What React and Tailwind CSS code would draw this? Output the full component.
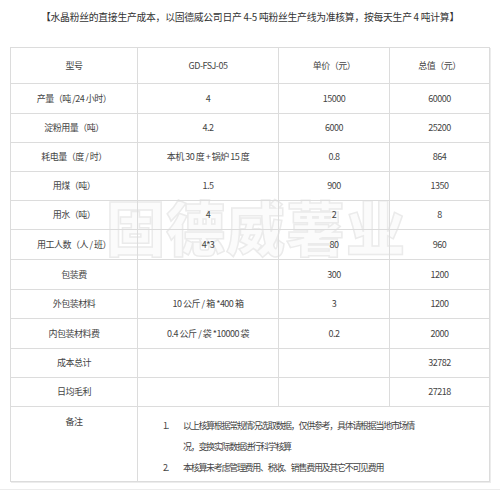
import React from "react";

const rows = [
  { h: "h-[30px]", name: "产量（吨 /24 小时）", model: "4", price: "15000", total: "60000" },
  { h: "h-[29px]", name: "淀粉用量（吨）", model: "4.2", price: "6000", total: "25200" },
  { h: "h-[29px]", name: "耗电量（度 / 时）", model: "本机 30 度 + 锅炉 15 度", price: "0.8", total: "864" },
  { h: "h-[29px]", name: "用煤（吨）", model: "1.5", price: "900", total: "1350" },
  { h: "h-[29px]", name: "用水（吨）", model: "4", price: "2", total: "8" },
  { h: "h-[30px]", name: "用工人数（人 / 班）", model: "4*3", price: "80", total: "960" },
  { h: "h-[30px]", name: "包装费", model: "", price: "300", total: "1200" },
  { h: "h-[29px]", name: "外包装材料", model: "10 公斤 / 箱 *400 箱", price: "3", total: "1200" },
  { h: "h-[30px]", name: "内包装材料费", model: "0.4 公斤 / 袋 *10000 袋", price: "0.2", total: "2000" },
  { h: "h-[29px]", name: "成本总计", model: "", price: "", total: "32782" },
  { h: "h-[29px]", name: "日均毛利", model: "", price: "", total: "27218" },
];

const cell = "border border-[#dcdcdc] text-center align-middle p-0";

export default function App() {
  return (
    <div className="relative w-[500px] h-[490px] bg-white overflow-hidden border-b border-[#ececec] font-['Microsoft_YaHei','Noto_Sans_CJK_SC',sans-serif] text-[#444]">
      {/* watermark, sits under the table text */}
      <div className="absolute left-[106px] top-[196px] text-[59px] leading-none font-black tracking-[1px] text-[#fbfbfb] [-webkit-text-stroke:1.5px_#ebebeb] pointer-events-none select-none whitespace-nowrap">
        固德威薯业
      </div>

      <p className="relative pt-[10px] text-center text-[9.8px] leading-[14px] tracking-[-0.25px] text-[#333]">
        【水晶粉丝的直接生产成本，以固德威公司日产 4-5 吨粉丝生产线为准核算，按每天生产 4 吨计算】
      </p>

      <table className="relative mt-[23px] ml-[10px] w-[479px] table-fixed border-collapse text-[9px] tracking-[-0.5px] shadow-[1px_1px_0_#ececec]">
        <colgroup>
          <col className="w-[127px]" />
          <col className="w-[141px]" />
          <col className="w-[111px]" />
          <col className="w-[100px]" />
        </colgroup>
        <tbody>
          <tr className="h-[36px]">
            <td className={cell}>型号</td>
            <td className={cell}>GD-FSJ-05</td>
            <td className={cell}>单价（元）</td>
            <td className={cell}>总值（元）</td>
          </tr>
          {rows.map((r) => (
            <tr key={r.name} className={r.h}>
              <td className={cell}>{r.name}</td>
              <td className={cell}>{r.model}</td>
              <td className={cell}>{r.price}</td>
              <td className={cell}>{r.total}</td>
            </tr>
          ))}
          <tr className="h-[75px]">
            <td className={cell + " !align-top pt-[8px]"}>备注</td>
            <td colSpan={3} className="border border-[#dcdcdc] align-top pt-[8px] pl-[25px] leading-[21px] tracking-[-1.3px]">
              <div className="flex">
                <span className="w-[20px] shrink-0">1.</span>
                <div>
                  <div>以上核算根据常规情况选取数据，仅供参考，具体请根据当地市场情</div>
                  <div>况，变换实际数据进行科学核算</div>
                </div>
              </div>
              <div className="flex">
                <span className="w-[20px] shrink-0">2.</span>
                <span>本核算未考虑管理费用、税收、销售费用及其它不可见费用</span>
              </div>
            </td>
          </tr>
        </tbody>
      </table>
    </div>
  );
}
